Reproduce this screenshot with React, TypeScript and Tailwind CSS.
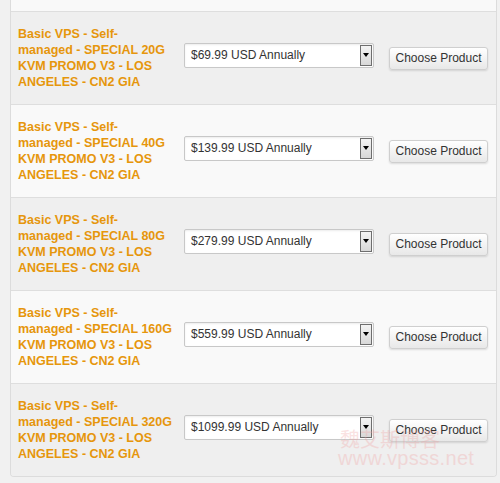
import React from 'react';

const products = [
  { size: '20G', price: '$69.99' },
  { size: '40G', price: '$139.99' },
  { size: '80G', price: '$279.99' },
  { size: '160G', price: '$559.99' },
  { size: '320G', price: '$1099.99' },
];

const FakeSelect = ({ label }: { label: string }) => (
  <div className="relative flex items-center w-[190px] h-[25px] bg-white border border-[#c8c8c8] rounded-[2px] shadow-[inset_0_1px_2px_rgba(0,0,0,0.08)]">
    <span className="pl-[6px] text-[12px] text-[#333]">{label}</span>
    {/* arrow box */}
    <div className="absolute right-[1px] top-[1px] bottom-[1px] w-[12px] border border-[#6e6e6e] bg-gradient-to-b from-[#f4f4f4] to-[#d8d8d8] flex items-center justify-center">
      <div className="w-0 h-0 border-l-[3px] border-r-[3px] border-t-[4px] border-l-transparent border-r-transparent border-t-black" />
    </div>
  </div>
);

const Row = ({ size, price, alt }: { size: string; price: string; alt: boolean }) => (
  <div className={`flex items-center h-[93px] border-t border-[#dedede] ${alt ? 'bg-[#f9f9f9]' : 'bg-[#efefef]'}`}>
    <div className="w-[173px] pl-[7px] text-[12.5px] leading-[16px] font-bold text-[#e6960c] whitespace-nowrap">
      Basic VPS - Self-
      <br />
      managed - SPECIAL {size}
      <br />
      KVM PROMO V3 - LOS
      <br />
      ANGELES - CN2 GIA
    </div>
    <div className="-mt-[6px]">
      <FakeSelect label={`${price} USD Annually`} />
    </div>
    <button className="ml-[15px] w-[99px] h-[23px] text-[12px] text-[#333] bg-gradient-to-b from-white to-[#e8e8e8] border border-[#cfcfcf] rounded-[3px] shadow-[0_1px_2px_rgba(0,0,0,0.12)]">
      Choose Product
    </button>
  </div>
);

export default function App() {
  return (
    <div className="relative w-[500px] h-[483px] bg-[#f1f1f1] overflow-hidden" style={{ fontFamily: '"Liberation Sans", Arial, sans-serif' }}>
      <div className="ml-[10px] w-[487px] border-x border-b border-[#dcdcdc] rounded-b-[4px] overflow-hidden">
        <div className="h-[11px] bg-[#f9f9f9]" />
        {products.map((p, i) => (
          <Row key={p.size} size={p.size} price={p.price} alt={i % 2 === 1} />
        ))}
      </div>
      {/* watermark */}
      <div className="absolute left-[338px] top-[429px] pointer-events-none text-[#f0a0a0] opacity-30 leading-none">
        <div className="pl-[2px] text-[20px]" style={{ fontFamily: '"Noto Sans CJK SC", sans-serif' }}>魏艾斯博客</div>
        <div className="-mt-[1px] text-[20px] tracking-[0.3px]">www.vpsss.net</div>
      </div>
    </div>
  );
}
